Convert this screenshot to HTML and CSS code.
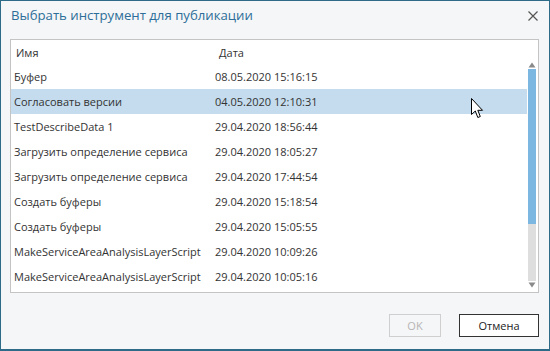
FILE: index.html
```html
<!DOCTYPE html>
<html>
<head>
<meta charset="utf-8">
<link rel="stylesheet" href="styles.css">
</head>
<body>
<div class="dialog">
  <div class="titlebar">
    <div class="title">Выбрать инструмент для публикации</div>
    <svg class="close" width="10" height="10" viewBox="0 0 10 10"><path d="M0.5 0.5L9.5 9.5M9.5 0.5L0.5 9.5" stroke="#555" stroke-width="1.2"/></svg>
  </div>
  <div class="listbox">
    <div class="list">
      <div class="row head"><span class="name">Имя</span><span class="date">Дата</span></div>
      <div class="row"><span class="name">Буфер</span><span class="date">08.05.2020 15:16:15</span></div>
      <div class="row sel"><span class="name">Согласовать версии</span><span class="date">04.05.2020 12:10:31</span></div>
      <div class="row"><span class="name">TestDescribeData 1</span><span class="date">29.04.2020 18:56:44</span></div>
      <div class="row"><span class="name">Загрузить определение сервиса</span><span class="date">29.04.2020 18:05:27</span></div>
      <div class="row"><span class="name">Загрузить определение сервиса</span><span class="date">29.04.2020 17:44:54</span></div>
      <div class="row"><span class="name">Создать буферы</span><span class="date">29.04.2020 15:18:54</span></div>
      <div class="row"><span class="name">Создать буферы</span><span class="date">29.04.2020 15:05:55</span></div>
      <div class="row"><span class="name">MakeServiceAreaAnalysisLayerScript</span><span class="date">29.04.2020 10:09:26</span></div>
      <div class="row"><span class="name">MakeServiceAreaAnalysisLayerScript</span><span class="date">29.04.2020 10:05:16</span></div>
    </div>
    <div class="scrollbar">
      <svg class="arrow" width="8" height="6" viewBox="0 0 8 6"><path d="M4 0.5L7.5 5.5H0.5Z" fill="#8a8a8a"/></svg>
      <div class="track"><div class="thumb"></div></div>
      <svg class="arrow" width="8" height="6" viewBox="0 0 8 6"><path d="M0.5 0.5H7.5L4 5.5Z" fill="#8a8a8a"/></svg>
    </div>
    <svg class="cursor" width="14" height="22" viewBox="0 0 14 22"><path d="M0.5 0.5V16.5L4.3 13L6.8 19.5L9.3 18.5L6.8 12.3H11.5Z" fill="#fff" stroke="#000" stroke-width="1" stroke-linejoin="round"/></svg>
  </div>
  <div class="footer">
    <button class="btn ok">OK</button>
    <button class="btn cancel">Отмена</button>
  </div>
</div>
</body>
</html>
```
FILE: styles.css
```css
html, body {
  margin: 0;
  padding: 0;
  background: #f5f6f7;
}
.dialog {
  width: 550px;
  height: 351px;
  box-sizing: border-box;
  border: 1px solid #2e6b88;
  border-bottom-width: 2px;
  background: #f5f6f7;
  font-family: "Open Sans", "Noto Sans", sans-serif;
  font-size: 11px;
  color: #333;
  display: flex;
  flex-direction: column;
}
.titlebar {
  height: 38px;
  display: flex;
  align-items: flex-start;
  justify-content: space-between;
  padding: 4px 11px 0 10px;
  box-sizing: border-box;
}
.title {
  font-size: 13.2px;
  line-height: 20px;
  color: #2c6e99;
}
.close {
  margin-top: 6px;
}
.listbox {
  position: relative;
  margin: 0 10px 0 9px;
  height: 252px;
  border: 1px solid #c4c4c4;
  background: #fff;
  display: flex;
}
.list {
  flex: 1;
  padding-top: 1px;
}
.row {
  display: flex;
  height: 25px;
  align-items: center;
  padding-left: 3px;
  white-space: nowrap;
}
.row.head {
  height: 23px;
  padding-left: 5px;
}
.row.head .name { width: 203px; }
.row.sel {
  background: #c4dced;
}
.name {
  width: 201px;
}
.scrollbar {
  width: 9px;
  margin-right: 2px;
  display: flex;
  flex-direction: column;
  align-items: center;
  padding: 21px 0 3px;
}
.arrow {
  flex: none;
  margin: 1px 0;
}
.track {
  flex: 1;
  width: 8px;
  background: #dedede;
  display: flex;
  flex-direction: column;
}
.thumb {
  height: 155px;
  background: #7bb7e1;
}
.cursor {
  position: absolute;
  left: 460px;
  top: 58px;
}
.footer {
  flex: 1;
  display: flex;
  justify-content: flex-end;
  align-items: flex-start;
  padding: 21px 10px 0 0;
  gap: 18px;
}
.btn {
  height: 23px;
  font-family: "Open Sans", "Noto Sans", sans-serif;
  font-size: 11px;
  background: #fff;
  padding: 0;
}
.ok {
  width: 52px;
  border: 1px solid #cfcfcf;
  color: #b5b5b5;
  background: #f5f6f7;
}
.cancel {
  width: 80px;
  border: 1px solid #333;
  color: #222;
}
```
